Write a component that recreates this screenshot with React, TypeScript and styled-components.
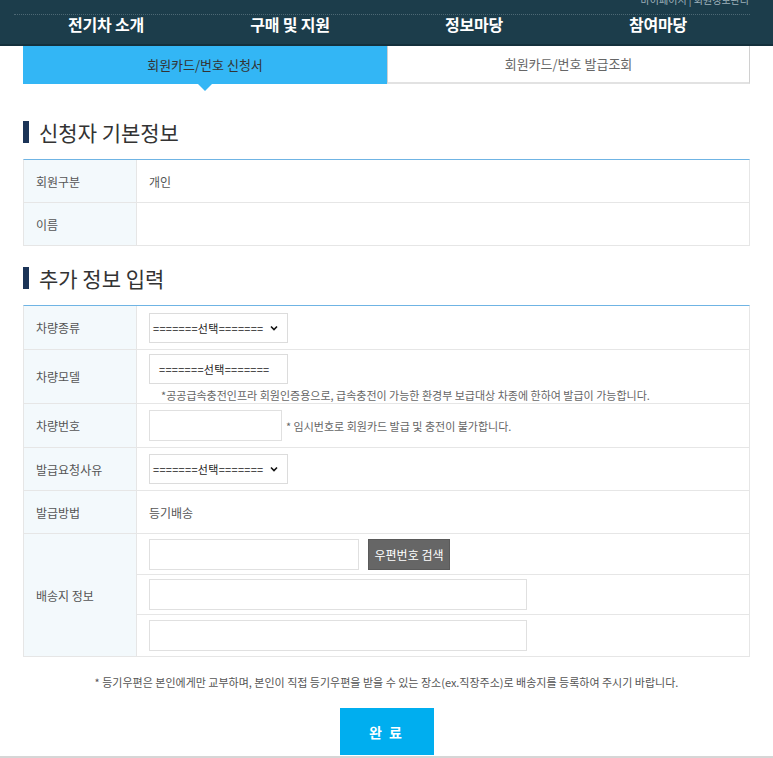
import React from "react";
import styled, { createGlobalStyle } from "styled-components";

const Global = createGlobalStyle`
  html, body { margin: 0; padding: 0; background: #fff; }
  body { font-family: "Noto Sans CJK KR", "Noto Sans", sans-serif; color: #333; }
  * { box-sizing: border-box; }
`;

const Page = styled.div`
  width: 773px;
  height: 758px;
  overflow: hidden;
  display: flex;
  flex-direction: column;
  & > * { flex-shrink: 0; }
`;

const Header = styled.header`
  height: 46px;
  background: #1c3d4b;
  border-bottom: 2px solid #14303c;
  overflow: hidden;
  display: flex;
  flex-direction: column;
`;

const Util = styled.div`
  height: 8px;
  margin-top: -6px;
  padding-right: 24px;
  text-align: right;
  font-size: 10px;
  line-height: 12px;
  color: #9fb2bb;
`;

const Nav = styled.nav`
  margin: 12px 23px 0 14px;
  display: grid;
  grid-template-columns: repeat(4, 1fr);
  border-top: 1px dotted #4d6874;
  height: 26px;
`;

const NavItem = styled.a`
  margin-top: -2px;
  text-align: center;
  color: #fff;
  font-weight: 700;
  font-size: 16px;
  line-height: 22px;
  letter-spacing: -0.2px;
`;

const Container = styled.main`
  padding: 0 23px;
  display: flex;
  flex-direction: column;
`;

const Tabs = styled.div`
  display: grid;
  grid-template-columns: 364px 363px;
  height: 38px;
`;

const Tab = styled.div<{ $active?: boolean }>`
  position: relative;
  display: flex;
  align-items: center;
  justify-content: center;
  padding-bottom: 2px;
  font-size: 13px;
  color: ${(p) => (p.$active ? "#333" : "#666")};
  background: ${(p) => (p.$active ? "#33b6f5" : "#fff")};
  border: ${(p) => (p.$active ? "none" : "1px solid #d0d0d0")};
  border-top: none;
  border-bottom: ${(p) => (p.$active ? "none" : "2px solid #e2e2e2")};
  ${(p) =>
    p.$active &&
    `&::after {
      content: "";
      position: absolute;
      left: 50%;
      bottom: -7px;
      margin-left: -7px;
      border-left: 7px solid transparent;
      border-right: 7px solid transparent;
      border-top: 7px solid #33b6f5;
    }`}
`;

const Title = styled.h2<{ $top: number }>`
  margin: ${(p) => p.$top}px 0 14px;
  display: flex;
  align-items: center;
  gap: 10px;
  font-size: 21px;
  font-weight: 400;
  line-height: 26px;
  color: #333;
  &::before {
    content: "";
    width: 6px;
    height: 22px;
    background: #1b3457;
  }
`;

const Table = styled.div`
  border-top: 1px solid #6fb4e4;
  border-left: 1px solid #e6e6e6;
  border-right: 1px solid #e6e6e6;
`;

const Row = styled.div<{ $h: number }>`
  display: grid;
  grid-template-columns: 113px 1fr;
  min-height: ${(p) => p.$h}px;
  border-bottom: 1px solid #e6e6e6;
`;

const Label = styled.div`
  background: #f3f9fc;
  border-right: 1px solid #e6e6e6;
  display: flex;
  align-items: center;
  padding-left: 12px;
  font-size: 12px;
  color: #555;
`;

const Cell = styled.div`
  display: flex;
  align-items: center;
  padding-left: 12px;
  font-size: 12px;
  color: #555;
`;

const CellCol = styled.div`
  display: flex;
  flex-direction: column;
  justify-content: center;
  padding: 4px 0 0 12px;
  gap: 3px;
`;

const SubCol = styled.div`
  display: flex;
  flex-direction: column;
`;

const SubRow = styled.div<{ $h: number; $last?: boolean }>`
  height: ${(p) => p.$h}px;
  display: flex;
  align-items: center;
  gap: 9px;
  padding-left: 12px;
  border-bottom: ${(p) => (p.$last ? "none" : "1px solid #e6e6e6")};
`;

const SelectBox = styled.div<{ $arrow?: boolean }>`
  width: 139px;
  height: 30px;
  border: 1px solid #dcdcdc;
  display: flex;
  align-items: center;
  justify-content: space-between;
  padding: 0 8px 0 ${(p) => (p.$arrow ? 3 : 9)}px;
  font-size: 11px;
  color: #222;
  letter-spacing: 0.3px;
  background: #fff;
`;

const Input = styled.div<{ $w: number }>`
  width: ${(p) => p.$w}px;
  height: 31px;
  border: 1px solid #e0e0e0;
  background: #fff;
`;

const Note = styled.span<{ $indent?: number }>`
  padding-left: ${(p) => p.$indent || 0}px;
  font-size: 11px;
  color: #666;
  letter-spacing: 0;
`;

const Gap = styled.div`
  display: flex;
  align-items: center;
  gap: 4px;
`;

const GrayButton = styled.button`
  width: 82px;
  height: 31px;
  background: #666;
  border: 1px solid #5a5a5a;
  color: #fff;
  font-family: inherit;
  font-size: 12px;
  padding: 0;
`;

const Footnote = styled.p`
  margin: 17px 0 0;
  text-align: center;
  font-size: 11px;
  color: #555;
  letter-spacing: 0;
`;

const Submit = styled.button`
  margin: 18px auto 0;
  width: 94px;
  height: 47px;
  background: #00aeef;
  border: none;
  color: #fff;
  font-family: inherit;
  font-weight: 700;
  font-size: 14px;
  letter-spacing: 2px;
`;

const Footer = styled.div`
  border-top: 2px solid #d6d6d6;
  margin-top: 1px;
  height: 4px;
`;

const Chevron = () => (
  <svg width="10" height="10" viewBox="0 0 10 10">
    <path d="M2 3.5 L5 6.5 L8 3.5" fill="none" stroke="#111" strokeWidth="1.6" />
  </svg>
);

const Sel = "=======선택=======";

export default function App() {
  return (
    <Page>
      <Global />
      <Header>
        <Util>마이페이지 | 회원정보관리</Util>
        <Nav>
          <NavItem>전기차 소개</NavItem>
          <NavItem>구매 및 지원</NavItem>
          <NavItem>정보마당</NavItem>
          <NavItem>참여마당</NavItem>
        </Nav>
      </Header>
      <Container>
        <Tabs>
          <Tab $active>회원카드/번호 신청서</Tab>
          <Tab>회원카드/번호 발급조회</Tab>
        </Tabs>

        <Title $top={35}>신청자 기본정보</Title>
        <Table>
          <Row $h={43}>
            <Label>회원구분</Label>
            <Cell>개인</Cell>
          </Row>
          <Row $h={43}>
            <Label>이름</Label>
            <Cell />
          </Row>
        </Table>

        <Title $top={19}>추가 정보 입력</Title>
        <Table>
          <Row $h={44}>
            <Label>차량종류</Label>
            <Cell>
              <SelectBox $arrow>
                {Sel}
                <Chevron />
              </SelectBox>
            </Cell>
          </Row>
          <Row $h={54}>
            <Label>차량모델</Label>
            <CellCol>
              <SelectBox>{Sel}</SelectBox>
              <Note $indent={12}>*공공급속충전인프라 회원인증용으로, 급속충전이 가능한 환경부 보급대상 차종에 한하여 발급이 가능합니다.</Note>
            </CellCol>
          </Row>
          <Row $h={44}>
            <Label>차량번호</Label>
            <Cell>
              <Gap>
                <Input $w={133} />
                <Note>* 임시번호로 회원카드 발급 및 충전이 불가합니다.</Note>
              </Gap>
            </Cell>
          </Row>
          <Row $h={43}>
            <Label>발급요청사유</Label>
            <Cell>
              <SelectBox $arrow>
                {Sel}
                <Chevron />
              </SelectBox>
            </Cell>
          </Row>
          <Row $h={43}>
            <Label>발급방법</Label>
            <Cell>등기배송</Cell>
          </Row>
          <Row $h={123}>
            <Label>배송지 정보</Label>
            <SubCol>
              <SubRow $h={41}>
                <Input $w={210} />
                <GrayButton>우편번호 검색</GrayButton>
              </SubRow>
              <SubRow $h={40}>
                <Input $w={378} />
              </SubRow>
              <SubRow $h={41} $last>
                <Input $w={378} />
              </SubRow>
            </SubCol>
          </Row>
        </Table>

        <Footnote>* 등기우편은 본인에게만 교부하며, 본인이 직접 등기우편을 받을 수 있는 장소(ex.직장주소)로 배송지를 등록하여 주시기 바랍니다.</Footnote>
        <Submit>완 료</Submit>
      </Container>
      <Footer />
    </Page>
  );
}
